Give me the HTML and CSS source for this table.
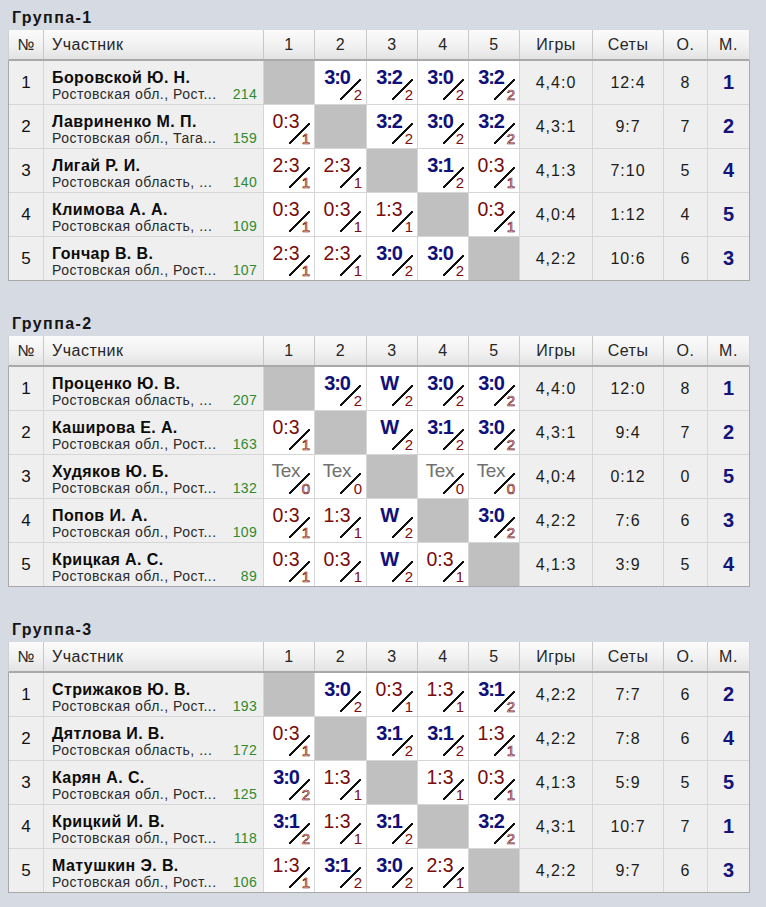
FILE: index.html
```html
<!DOCTYPE html>
<html lang="ru">
<head>
<meta charset="utf-8">
<title>Группы</title>
<link rel="stylesheet" href="styles.css">
</head>
<body>
<div class="page">

<section class="group">
  <div class="title">Группа-1</div>
  <div class="grid hdr"><div>№</div><div class="p">Участник</div><div>1</div><div>2</div><div>3</div><div>4</div><div>5</div><div>Игры</div><div>Сеты</div><div>О.</div><div>М.</div></div>
  <div class="body">
    <div class="grid row"><div class="n">1</div><div class="nm"><div class="fio">Боровской Ю. Н.</div><div class="reg"><span>Ростовская обл., Рост...</span><span class="rt">214</span></div></div>
      <div class="x"></div><div class="sc w"><b>3:0</b><i>2</i></div><div class="sc w"><b>3:2</b><i>2</i></div><div class="sc w"><b>3:0</b><i>2</i></div><div class="sc w"><b>3:2</b><i class="d">2</i></div>
      <div class="st">4,4:0</div><div class="st">12:4</div><div class="st">8</div><div class="rk">1</div></div>
    <div class="grid row"><div class="n">2</div><div class="nm"><div class="fio">Лавриненко М. П.</div><div class="reg"><span>Ростовская обл., Тага...</span><span class="rt">159</span></div></div>
      <div class="sc l"><b>0:3</b><i class="d">1</i></div><div class="x"></div><div class="sc w"><b>3:2</b><i>2</i></div><div class="sc w"><b>3:0</b><i>2</i></div><div class="sc w"><b>3:2</b><i class="d">2</i></div>
      <div class="st">4,3:1</div><div class="st">9:7</div><div class="st">7</div><div class="rk">2</div></div>
    <div class="grid row"><div class="n">3</div><div class="nm"><div class="fio">Лигай Р. И.</div><div class="reg"><span>Ростовская область, ...</span><span class="rt">140</span></div></div>
      <div class="sc l"><b>2:3</b><i class="d">1</i></div><div class="sc l"><b>2:3</b><i>1</i></div><div class="x"></div><div class="sc w"><b>3:1</b><i>2</i></div><div class="sc l"><b>0:3</b><i class="d">1</i></div>
      <div class="st">4,1:3</div><div class="st">7:10</div><div class="st">5</div><div class="rk">4</div></div>
    <div class="grid row"><div class="n">4</div><div class="nm"><div class="fio">Климова А. А.</div><div class="reg"><span>Ростовская область, ...</span><span class="rt">109</span></div></div>
      <div class="sc l"><b>0:3</b><i class="d">1</i></div><div class="sc l"><b>0:3</b><i>1</i></div><div class="sc l"><b>1:3</b><i>1</i></div><div class="x"></div><div class="sc l"><b>0:3</b><i class="d">1</i></div>
      <div class="st">4,0:4</div><div class="st">1:12</div><div class="st">4</div><div class="rk">5</div></div>
    <div class="grid row"><div class="n">5</div><div class="nm"><div class="fio">Гончар В. В.</div><div class="reg"><span>Ростовская обл., Рост...</span><span class="rt">107</span></div></div>
      <div class="sc l"><b>2:3</b><i class="d">1</i></div><div class="sc l"><b>2:3</b><i>1</i></div><div class="sc w"><b>3:0</b><i>2</i></div><div class="sc w"><b>3:0</b><i>2</i></div><div class="x"></div>
      <div class="st">4,2:2</div><div class="st">10:6</div><div class="st">6</div><div class="rk">3</div></div>
  </div>
</section>

<section class="group">
  <div class="title">Группа-2</div>
  <div class="grid hdr"><div>№</div><div class="p">Участник</div><div>1</div><div>2</div><div>3</div><div>4</div><div>5</div><div>Игры</div><div>Сеты</div><div>О.</div><div>М.</div></div>
  <div class="body">
    <div class="grid row"><div class="n">1</div><div class="nm"><div class="fio">Проценко Ю. В.</div><div class="reg"><span>Ростовская область, ...</span><span class="rt">207</span></div></div>
      <div class="x"></div><div class="sc w"><b>3:0</b><i>2</i></div><div class="sc w"><b>W</b><i>2</i></div><div class="sc w"><b>3:0</b><i>2</i></div><div class="sc w"><b>3:0</b><i class="d">2</i></div>
      <div class="st">4,4:0</div><div class="st">12:0</div><div class="st">8</div><div class="rk">1</div></div>
    <div class="grid row"><div class="n">2</div><div class="nm"><div class="fio">Каширова Е. А.</div><div class="reg"><span>Ростовская обл., Рост...</span><span class="rt">163</span></div></div>
      <div class="sc l"><b>0:3</b><i class="d">1</i></div><div class="x"></div><div class="sc w"><b>W</b><i>2</i></div><div class="sc w"><b>3:1</b><i>2</i></div><div class="sc w"><b>3:0</b><i class="d">2</i></div>
      <div class="st">4,3:1</div><div class="st">9:4</div><div class="st">7</div><div class="rk">2</div></div>
    <div class="grid row"><div class="n">3</div><div class="nm"><div class="fio">Худяков Ю. Б.</div><div class="reg"><span>Ростовская обл., Рост...</span><span class="rt">132</span></div></div>
      <div class="sc t"><b>Tex</b><i class="d">0</i></div><div class="sc t"><b>Tex</b><i>0</i></div><div class="x"></div><div class="sc t"><b>Tex</b><i>0</i></div><div class="sc t"><b>Tex</b><i class="d">0</i></div>
      <div class="st">4,0:4</div><div class="st">0:12</div><div class="st">0</div><div class="rk">5</div></div>
    <div class="grid row"><div class="n">4</div><div class="nm"><div class="fio">Попов И. А.</div><div class="reg"><span>Ростовская обл., Рост...</span><span class="rt">109</span></div></div>
      <div class="sc l"><b>0:3</b><i class="d">1</i></div><div class="sc l"><b>1:3</b><i>1</i></div><div class="sc w"><b>W</b><i>2</i></div><div class="x"></div><div class="sc w"><b>3:0</b><i class="d">2</i></div>
      <div class="st">4,2:2</div><div class="st">7:6</div><div class="st">6</div><div class="rk">3</div></div>
    <div class="grid row"><div class="n">5</div><div class="nm"><div class="fio">Крицкая А. С.</div><div class="reg"><span>Ростовская обл., Рост...</span><span class="rt">89</span></div></div>
      <div class="sc l"><b>0:3</b><i class="d">1</i></div><div class="sc l"><b>0:3</b><i>1</i></div><div class="sc w"><b>W</b><i>2</i></div><div class="sc l"><b>0:3</b><i>1</i></div><div class="x"></div>
      <div class="st">4,1:3</div><div class="st">3:9</div><div class="st">5</div><div class="rk">4</div></div>
  </div>
</section>

<section class="group">
  <div class="title">Группа-3</div>
  <div class="grid hdr"><div>№</div><div class="p">Участник</div><div>1</div><div>2</div><div>3</div><div>4</div><div>5</div><div>Игры</div><div>Сеты</div><div>О.</div><div>М.</div></div>
  <div class="body">
    <div class="grid row"><div class="n">1</div><div class="nm"><div class="fio">Стрижаков Ю. В.</div><div class="reg"><span>Ростовская обл., Рост...</span><span class="rt">193</span></div></div>
      <div class="x"></div><div class="sc w"><b>3:0</b><i>2</i></div><div class="sc l"><b>0:3</b><i>1</i></div><div class="sc l"><b>1:3</b><i>1</i></div><div class="sc w"><b>3:1</b><i class="d">2</i></div>
      <div class="st">4,2:2</div><div class="st">7:7</div><div class="st">6</div><div class="rk">2</div></div>
    <div class="grid row"><div class="n">2</div><div class="nm"><div class="fio">Дятлова И. В.</div><div class="reg"><span>Ростовская область, ...</span><span class="rt">172</span></div></div>
      <div class="sc l"><b>0:3</b><i class="d">1</i></div><div class="x"></div><div class="sc w"><b>3:1</b><i>2</i></div><div class="sc w"><b>3:1</b><i>2</i></div><div class="sc l"><b>1:3</b><i class="d">1</i></div>
      <div class="st">4,2:2</div><div class="st">7:8</div><div class="st">6</div><div class="rk">4</div></div>
    <div class="grid row"><div class="n">3</div><div class="nm"><div class="fio">Карян А. С.</div><div class="reg"><span>Ростовская обл., Рост...</span><span class="rt">125</span></div></div>
      <div class="sc w"><b>3:0</b><i class="d">2</i></div><div class="sc l"><b>1:3</b><i>1</i></div><div class="x"></div><div class="sc l"><b>1:3</b><i>1</i></div><div class="sc l"><b>0:3</b><i class="d">1</i></div>
      <div class="st">4,1:3</div><div class="st">5:9</div><div class="st">5</div><div class="rk">5</div></div>
    <div class="grid row"><div class="n">4</div><div class="nm"><div class="fio">Крицкий И. В.</div><div class="reg"><span>Ростовская обл., Рост...</span><span class="rt">118</span></div></div>
      <div class="sc w"><b>3:1</b><i class="d">2</i></div><div class="sc l"><b>1:3</b><i>1</i></div><div class="sc w"><b>3:1</b><i>2</i></div><div class="x"></div><div class="sc w"><b>3:2</b><i class="d">2</i></div>
      <div class="st">4,3:1</div><div class="st">10:7</div><div class="st">7</div><div class="rk">1</div></div>
    <div class="grid row"><div class="n">5</div><div class="nm"><div class="fio">Матушкин Э. В.</div><div class="reg"><span>Ростовская обл., Рост...</span><span class="rt">106</span></div></div>
      <div class="sc l"><b>1:3</b><i class="d">1</i></div><div class="sc w"><b>3:1</b><i>2</i></div><div class="sc w"><b>3:0</b><i>2</i></div><div class="sc l"><b>2:3</b><i>1</i></div><div class="x"></div>
      <div class="st">4,2:2</div><div class="st">9:7</div><div class="st">6</div><div class="rk">3</div></div>
  </div>
</section>

</div>
</body>
</html>
```

FILE: styles.css
```css
html, body {
  margin: 0;
  padding: 0;
}
body {
  background: #d6dae2;
  font-family: "Liberation Sans", Arial, sans-serif;
  color: #111;
}
.page {
  padding: 0 8px;
}
.group {
  width: 742px;
  margin-bottom: 25px;
}
.title {
  padding: 6px 0 0 4px;
  height: 24px;
  line-height: 24px;
  font-size: 16px;
  font-weight: bold;
  letter-spacing: 1.4px;
  color: #151515;
}
.grid {
  display: grid;
  grid-template-columns: 34px 219px 50px 51px 50px 50px 50px 72px 70px 43px 41px;
  column-gap: 1px;
}
.hdr {
  height: 29px;
  background: #c8c8c8;
  border-left: 1px solid #d0d0d0;
  border-right: 1px solid #d0d0d0;
  border-bottom: 2px solid #a9a9a9;
}
.hdr > div {
  background: linear-gradient(#fbfbfb, #f1f1f1 55%, #e3e3e3);
  display: flex;
  align-items: center;
  justify-content: center;
  font-size: 16px;
  letter-spacing: 0.5px;
  color: #262626;
  padding-top: 1px;
}
.hdr > .p {
  justify-content: flex-start;
  padding-left: 8px;
}
.body {
  display: flex;
  flex-direction: column;
  gap: 1px;
  background: #d6d6d6;
  border: 1px solid #a8a8a8;
  border-top: 0;
}
.row {
  height: 43px;
}
.row > div {
  background: #efefef;
}
.n {
  display: flex;
  align-items: center;
  justify-content: center;
  font-size: 17px;
  color: #111;
}
.nm {
  padding: 8px 6px 0 8px;
}
.fio {
  font-size: 16px;
  font-weight: bold;
  line-height: 17px;
  letter-spacing: 0.4px;
  color: #0c0c0c;
  white-space: nowrap;
}
.reg {
  display: flex;
  justify-content: space-between;
  font-size: 14px;
  line-height: 16px;
  color: #2a2a2a;
  white-space: nowrap;
}
.reg span:first-child {
  letter-spacing: 0.5px;
}
.rt {
  color: #2f8a2f;
  letter-spacing: 0.3px;
}
.st {
  display: flex;
  align-items: center;
  justify-content: center;
  font-size: 16px;
  letter-spacing: 1px;
  color: #1c1c1c;
}
.rk {
  display: flex;
  align-items: center;
  justify-content: center;
  font-size: 20px;
  font-weight: bold;
  color: #14147a;
}
.row > .x {
  background: #c0c0c0;
}
.row > .sc {
  display: flex;
  flex-direction: column;
  justify-content: space-between;
  padding: 6px 4px 2px 0;
  background:
    linear-gradient(to bottom right, transparent calc(50% - 0.9px), #111 calc(50% - 0.9px), #111 calc(50% + 0.9px), transparent calc(50% + 0.9px)) 25px 18px / 21px 21px no-repeat,
    #fff;
}
.sc b {
  display: block;
  width: 44px;
  text-align: center;
  font-size: 20px;
  line-height: 20px;
  white-space: nowrap;
}
.sc.w b {
  font-weight: bold;
  color: #10107a;
  letter-spacing: -1.2px;
}
.sc.l b {
  font-weight: normal;
  font-size: 19.5px;
  color: #7a0c0c;
}
.sc.t b {
  font-weight: normal;
  font-size: 19px;
  color: #707070;
  letter-spacing: -0.3px;
}
.sc i {
  align-self: flex-end;
  font-style: normal;
  font-size: 15px;
  line-height: 15px;
  color: #7a0c0c;
}
.sc i.d {
  color: #fff;
  -webkit-text-stroke: 0.7px #7a0c0c;
}
```
